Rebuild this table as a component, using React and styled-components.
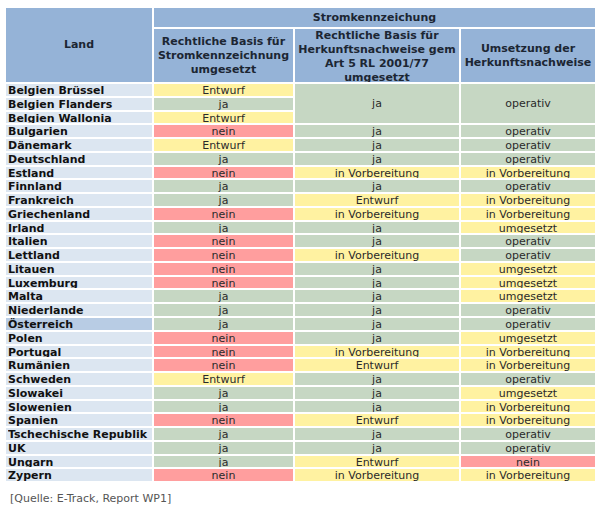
import React from 'react';
import styled, { createGlobalStyle } from 'styled-components';

const GlobalStyle = createGlobalStyle`
    body {
        margin: 0;
        background: #ffffff;
        font-family: "DejaVu Sans", Verdana, sans-serif;
    }
`

const Page = styled.div`
    padding: 6px 0 0 4px;
`

const Table = styled.table`
    border-collapse: separate;
    border-spacing: 2px;
    table-layout: fixed;
    font-size: 11px;
`

const HeadCell = styled.th`
    background: #95b3d7;
    color: #1c2633;
    font-weight: bold;
    text-align: center;
    vertical-align: middle;
    padding: 0;
    line-height: 14px;
`

const HeadClip = styled.div`
    max-height: ${props => props.$h}px;
    overflow: hidden;
`

const LandCell = styled.td`
    background: ${props => props.$dark ? '#b8cce4' : '#dce6f1'};
    color: #111;
    font-weight: bold;
    padding: 0 0 0 2px;
    text-align: left;
`

const ValueCell = styled.td`
    background: ${props => colors[props.$c]};
    color: #2a2a2a;
    text-align: center;
    vertical-align: middle;
    padding: 0;
`

const Clip = styled.div`
    height: 11.78px;
    line-height: 13px;
    overflow: hidden;
    white-space: nowrap;
`

const Source = styled.p`
    margin: 9px 0 0 6px;
    font-size: 11px;
    color: #555;
`

const colors = {
    g: '#c6d7c3',
    y: '#fff2a1',
    r: '#ff9e9e',
}

const label = { ja: 'g', Entwurf: 'y', nein: 'r', operativ: 'g', umgesetzt: 'y', 'in Vorbereitung': 'y' }

const rows = [
    ['Belgien Brüssel', 'Entwurf', 'ja', 'operativ'],
    ['Belgien Flanders', 'ja'],
    ['Belgien Wallonia', 'Entwurf'],
    ['Bulgarien', 'nein', 'ja', 'operativ'],
    ['Dänemark', 'Entwurf', 'ja', 'operativ'],
    ['Deutschland', 'ja', 'ja', 'operativ'],
    ['Estland', 'nein', 'in Vorbereitung', 'in Vorbereitung'],
    ['Finnland', 'ja', 'ja', 'operativ'],
    ['Frankreich', 'ja', 'Entwurf', 'in Vorbereitung'],
    ['Griechenland', 'nein', 'in Vorbereitung', 'in Vorbereitung'],
    ['Irland', 'ja', 'ja', 'umgesetzt'],
    ['Italien', 'nein', 'ja', 'operativ'],
    ['Lettland', 'nein', 'in Vorbereitung', 'operativ'],
    ['Litauen', 'nein', 'ja', 'umgesetzt'],
    ['Luxemburg', 'nein', 'ja', 'umgesetzt'],
    ['Malta', 'ja', 'ja', 'umgesetzt'],
    ['Niederlande', 'ja', 'ja', 'operativ'],
    ['Österreich', 'ja', 'ja', 'operativ'],
    ['Polen', 'nein', 'ja', 'umgesetzt'],
    ['Portugal', 'nein', 'in Vorbereitung', 'in Vorbereitung'],
    ['Rumänien', 'nein', 'Entwurf', 'in Vorbereitung'],
    ['Schweden', 'Entwurf', 'ja', 'operativ'],
    ['Slowakei', 'ja', 'ja', 'umgesetzt'],
    ['Slowenien', 'ja', 'ja', 'in Vorbereitung'],
    ['Spanien', 'nein', 'Entwurf', 'in Vorbereitung'],
    ['Tschechische Republik', 'ja', 'ja', 'operativ'],
    ['UK', 'ja', 'ja', 'operativ'],
    ['Ungarn', 'ja', 'Entwurf', 'nein'],
    ['Zypern', 'nein', 'in Vorbereitung', 'in Vorbereitung'],
]

function Value({ text, span }) {
    return (
        <ValueCell $c={label[text]} rowSpan={span}>
            {span ? text : <Clip>{text}</Clip>}
        </ValueCell>
    )
}

export default function App() {
    return (
        <Page>
            <GlobalStyle />
            <Table>
                <colgroup>
                    <col style={{ width: 146 }} />
                    <col style={{ width: 139 }} />
                    <col style={{ width: 164 }} />
                    <col style={{ width: 134 }} />
                </colgroup>
                <thead>
                    <tr>
                        <HeadCell rowSpan={2}>Land</HeadCell>
                        <HeadCell colSpan={3} style={{ height: 19 }}>Stromkennzeichung</HeadCell>
                    </tr>
                    <tr>
                        <HeadCell style={{ height: 53 }}>
                            <HeadClip $h={53}>Rechtliche Basis für<br />Stromkennzeichnung<br />umgesetzt</HeadClip>
                        </HeadCell>
                        <HeadCell>
                            <HeadClip $h={53}>Rechtliche Basis für<br />Herkunftsnachweise gem<br />Art 5 RL 2001/77<br />umgesetzt</HeadClip>
                        </HeadCell>
                        <HeadCell>
                            <HeadClip $h={53}>Umsetzung der<br />Herkunftsnachweise</HeadClip>
                        </HeadCell>
                    </tr>
                </thead>
                <tbody>
                    {rows.map(([land, a, b, c], i) => (
                        <tr key={land}>
                            <LandCell $dark={land === 'Österreich'}><Clip>{land}</Clip></LandCell>
                            <Value text={a} />
                            {b && <Value text={b} span={i === 0 ? 3 : undefined} />}
                            {c && <Value text={c} span={i === 0 ? 3 : undefined} />}
                        </tr>
                    ))}
                </tbody>
            </Table>
            <Source>[Quelle: E-Track, Report WP1]</Source>
        </Page>
    )
}
